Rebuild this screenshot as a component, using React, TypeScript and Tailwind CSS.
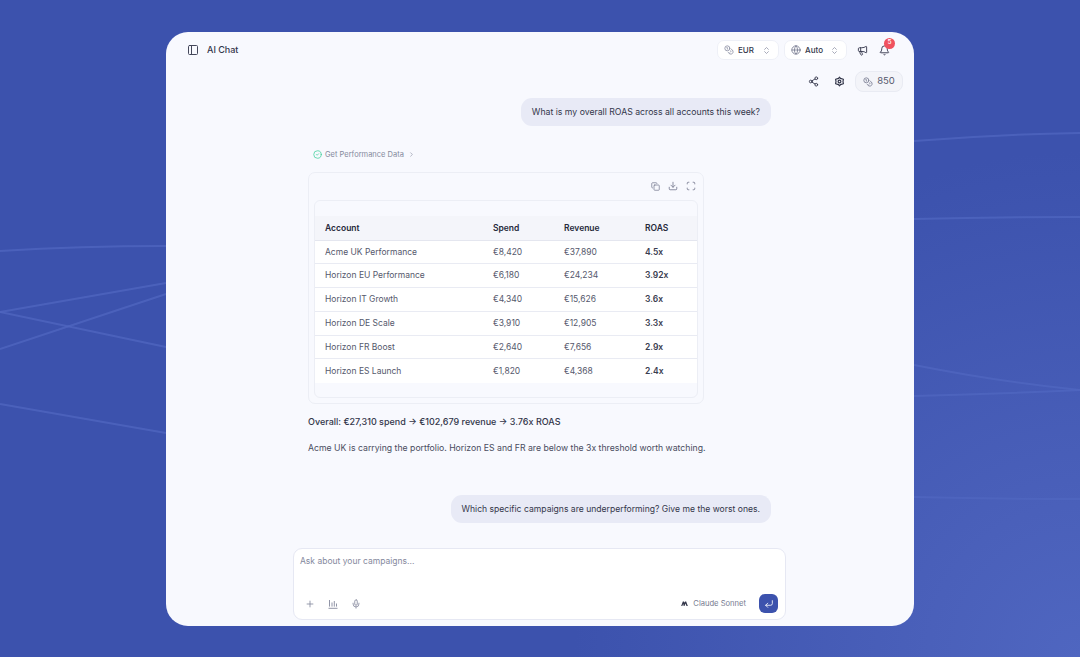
import { Bell, ChevronRight, ChevronsUpDown, CircleCheck, Coins, Copy, CornerDownLeft, Download, Globe, Megaphone, Mic, PanelLeft, Plus, Scan, Share2 } from "lucide-react";

const rows = [
  { account: "Acme UK Performance", spend: "€8,420", revenue: "€37,890", roas: "4.5x" },
  { account: "Horizon EU Performance", spend: "€6,180", revenue: "€24,234", roas: "3.92x" },
  { account: "Horizon IT Growth", spend: "€4,340", revenue: "€15,626", roas: "3.6x" },
  { account: "Horizon DE Scale", spend: "€3,910", revenue: "€12,905", roas: "3.3x" },
  { account: "Horizon FR Boost", spend: "€2,640", revenue: "€7,656", roas: "2.9x" },
  { account: "Horizon ES Launch", spend: "€1,820", revenue: "€4,368", roas: "2.4x" },
];

function Backdrop() {
  return (
    <svg className="absolute inset-0" width="1080" height="657" viewBox="0 0 1080 657" fill="none" stroke="#5067c0" strokeWidth="2" strokeOpacity="0.75">
      <path d="M0 251 Q80 246 166 246" />
      <path d="M0 312 L166 283" />
      <path d="M0 312 L166 347" />
      <path d="M0 349 L166 294" />
      <path d="M0 404 L166 433" />
      <path d="M914 141 Q1000 134 1080 133" />
      <path d="M914 219 Q1000 217 1080 217" />
      <path d="M914 365 Q1000 382 1080 390" />
      <path d="M914 396 Q1000 394 1080 390" />
      <path d="M914 497 Q1000 499 1080 499" />
    </svg>
  );
}

function Select({ icon, label, width }: { icon: React.ReactNode; label: string; width: string }) {
  return (
    <div className={`${width} h-[20px] flex items-center pl-[6px] pr-[7px] bg-white border border-[#eef0f7] rounded-[7px] text-[8px] font-medium text-[#33364a]`}>
      {icon}
      <span className="ml-[4px]">{label}</span>
      <ChevronsUpDown size={9} className="ml-auto text-[#8b8fa3]" />
    </div>
  );
}

function Bubble({ text, size }: { text: string; size: string }) {
  return (
    <div className={`${size} self-end h-[28px] flex items-center px-[11px] pt-[1px] bg-[#e8eaf6] rounded-[11px] text-[#33364a] mr-[143px]`}>
      {text}
    </div>
  );
}

export default function App() {
  return (
    <div className="relative w-[1080px] h-[657px] overflow-hidden bg-[#3c52ad] bg-[radial-gradient(circle_at_100%_100%,#4f66c0_0%,#4a60ba_12%,#3c52ad_40%)] pl-[166px] pt-[32px] font-['Inter',sans-serif]">
      <Backdrop />
      <div className="relative w-[748px] h-[594px] rounded-[22px] bg-[#f8f9fe] flex flex-col overflow-hidden">
        <div className="flex items-center h-[20px] mt-[8px] pl-[21px] pr-[24px]">
          <PanelLeft size={12} className="text-[#44475a]" />
          <span className="ml-[8px] text-[9px] font-medium text-[#33364a]">AI Chat</span>
          <div className="ml-auto flex items-center">
            <Select width="w-[62px]" label="EUR" icon={<Coins size={10} className="text-[#8b8fa3]" />} />
            <div className="w-[5px]" />
            <Select width="w-[63px]" label="Auto" icon={<Globe size={10} className="text-[#777b90]" />} />
            <Megaphone size={11} className="ml-[10px] text-[#33364a]" />
            <div className="relative ml-[11px]">
              <Bell size={11} className="text-[#33364a]" />
              <span className="absolute -top-[7px] left-[5px] w-[11px] h-[11px] rounded-full bg-[#f0525f] text-white text-[6.5px] font-medium flex items-center justify-center">5</span>
            </div>
          </div>
        </div>

        <div className="flex items-center justify-end h-[21px] mt-[11px] pr-[11px]">
          <Share2 size={11} className="text-[#33364a]" />
          <svg className="ml-[15px] text-[#33364a]" width="11" height="11" viewBox="0 0 24 24" fill="none" stroke="currentColor" strokeWidth="2.6" strokeLinejoin="round">
            <path d="M12 2.5 L14 5.2 L20.5 7.2 L19.6 12 L20.5 16.8 L14 18.8 L12 21.5 L10 18.8 L3.5 16.8 L4.4 12 L3.5 7.2 L10 5.2 Z" />
            <circle cx="12" cy="12" r="3" />
          </svg>
          <div className="ml-[10px] w-[48px] h-[21px] flex items-center justify-center gap-[4px] bg-[#f3f4f9] border border-[#e9ebf3] rounded-[8px] text-[9.5px] text-[#55586c]">
            <Coins size={10} className="text-[#777b90]" />
            850
          </div>
        </div>

        <div className="flex flex-col mt-[6px]">
          <Bubble size="text-[8.7px]" text="What is my overall ROAS across all accounts this week?" />

          <div className="flex items-center h-[12px] mt-[22.5px] ml-[147px] text-[7.5px] text-[#85899d]">
            <CircleCheck size={9} className="text-[#3ecf9b]" />
            <span className="ml-[3px]">Get Performance Data</span>
            <ChevronRight size={7} className="ml-[4px] text-[#85899d]" />
          </div>

          <div className="w-[396px] h-[232px] mt-[11.5px] ml-[142px] border border-[#eceef5] rounded-[7px] px-[5px]">
            <div className="flex items-center justify-end h-[27px] gap-[8px] pr-[2px] pb-[1px] text-[#777b90]">
              <Copy size={9} />
              <Download size={10} />
              <Scan size={10} />
            </div>
            <div className="h-[198px] border border-[#eceef5] rounded-[6px] pt-[15px]">
              <table className="w-full table-fixed border-collapse text-[8.5px] text-[#55586c]">
                <thead>
                  <tr className="h-[24px] bg-[#f4f5fa] border-b border-[#e4e6ef] text-[#26293a] text-left">
                    <th className="w-[178px] pl-[10px] pt-[1px] font-semibold">Account</th>
                    <th className="w-[71px] pt-[1px] font-semibold">Spend</th>
                    <th className="w-[81px] pt-[1px] font-semibold">Revenue</th>
                    <th className="pt-[1px] font-semibold">ROAS</th>
                  </tr>
                </thead>
                <tbody className="bg-white">
                  {rows.map((row, i) => (
                    <tr key={row.account} className={`h-[23.75px] ${i < rows.length - 1 ? "border-b border-[#e9ebf3]" : ""}`}>
                      <td className="pl-[10px]">{row.account}</td>
                      <td>{row.spend}</td>
                      <td>{row.revenue}</td>
                      <td className="font-semibold text-[#3a3d50]">{row.roas}</td>
                    </tr>
                  ))}
                </tbody>
              </table>
            </div>
          </div>

          <p className="mt-[12px] ml-[142px] h-[12px] leading-[12px] text-[9px] font-medium text-[#33364a]">
            Overall: €27,310 spend → €102,679 revenue → 3.76x ROAS
          </p>
          <p className="mt-[14px] ml-[142px] h-[12px] leading-[12px] text-[8.7px] text-[#4a4d60]">
            Acme UK is carrying the portfolio. Horizon ES and FR are below the 3x threshold worth watching.
          </p>

          <div className="h-[41px]" />
          <Bubble size="text-[8.6px]" text="Which specific campaigns are underperforming? Give me the worst ones." />
        </div>

        <div className="flex flex-col w-[493px] h-[72px] mt-[25px] ml-[127px] bg-white border border-[#e6e8f3] rounded-[9px] pl-[6px] pr-[7px]">
          <span className="mt-[6px] text-[8.5px] leading-[12px] text-[#85899d]">Ask about your campaigns...</span>
          <div className="mt-auto mb-[6px] flex items-center h-[19px] text-[#85899d]">
            <Plus size={10} className="ml-[5px]" />
            <svg className="ml-[13px]" width="10" height="10" viewBox="0 0 10 10" fill="none" stroke="currentColor" strokeWidth="0.9">
              <path d="M0.5 9.3H9.5M1.5 1V7.6M4 3.5V7.6M6.3 2V7.6M8.5 4.5V7.6" />
            </svg>
            <Mic size={10} className="ml-[13px]" />
            <svg className="ml-auto text-[#33364a]" width="7" height="5" viewBox="0 0 8 6" fill="currentColor">
              <path d="M0 6 L2 0.5 L3.4 0.5 L4 2.2 L4.7 0.5 L6 0.5 L8 6 L6.4 6 L5.2 3 L4 6 L3 6 L2.4 3.4 L1.4 6 Z" />
            </svg>
            <span className="ml-[5px] text-[7.6px] text-[#777b90]">Claude Sonnet</span>
            <div className="ml-[13px] w-[19px] h-[19px] rounded-[6px] bg-[#3c52ad] flex items-center justify-center">
              <CornerDownLeft size={10} className="text-white" />
            </div>
          </div>
        </div>
      </div>
    </div>
  );
}
